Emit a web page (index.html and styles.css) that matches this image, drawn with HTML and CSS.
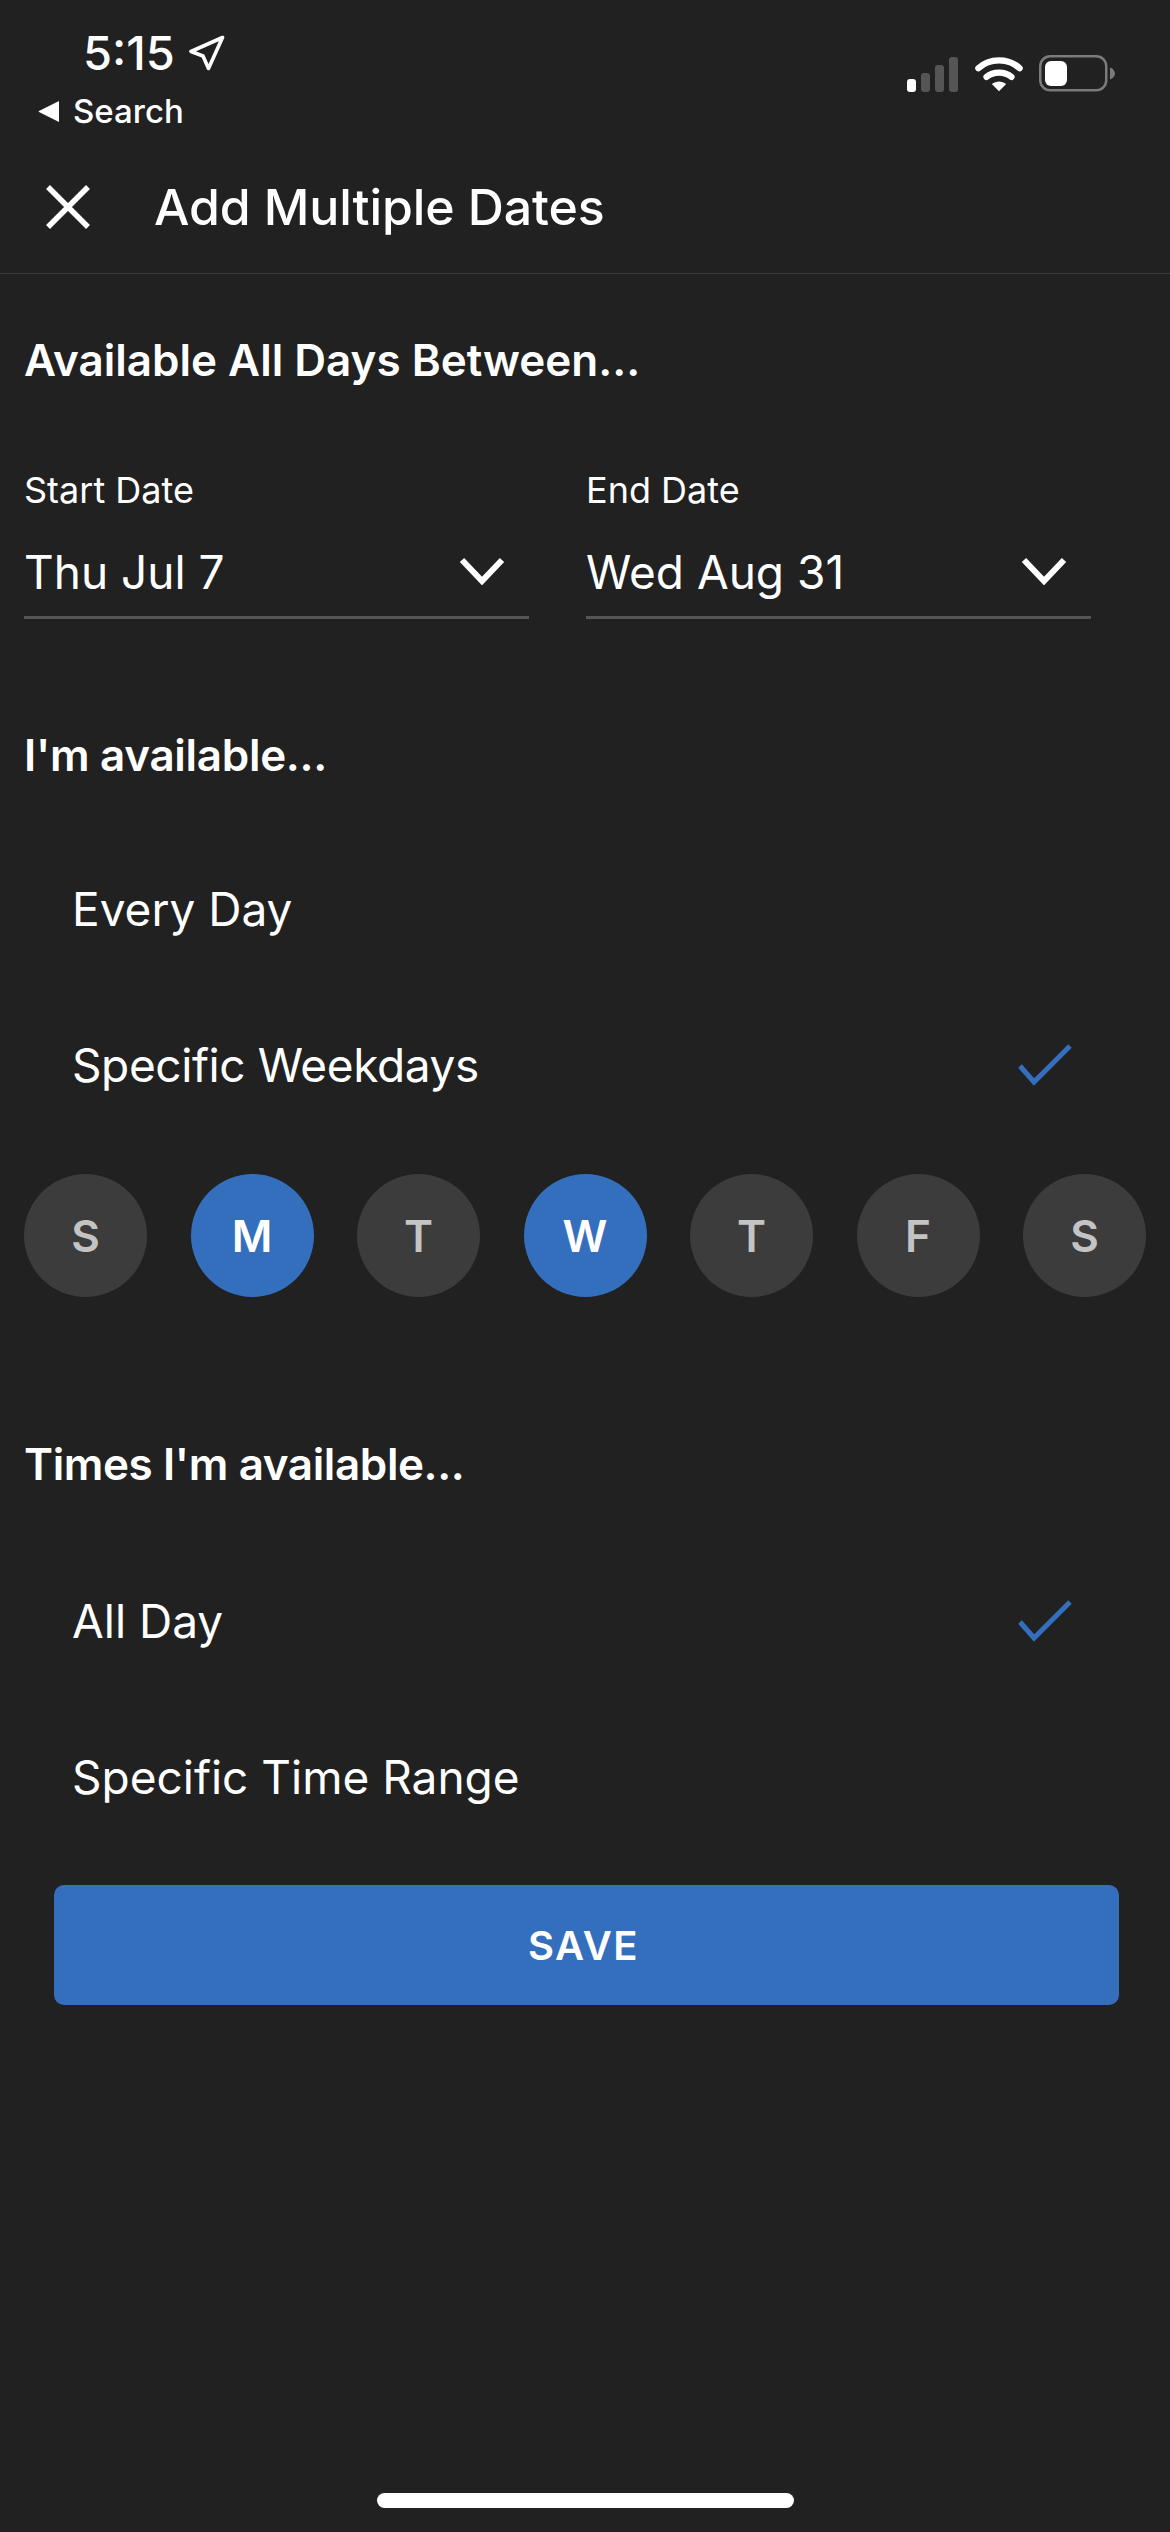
FILE: index.html
```html
<!DOCTYPE html>
<html lang="en">
<head>
<meta charset="utf-8">
<title>Add Multiple Dates</title>
<link rel="stylesheet" href="styles.css">
</head>
<body>
<div class="screen">
  <header class="top">
    <div class="status">
      <div class="status-left">
        <div class="time-row">
          <span class="time">5:15</span>
          <svg class="loc" width="36" height="36" viewBox="0 0 36 36"><path d="M33.500 2.500 L2 16.500 L14 21 L19.500 33.500 Z" fill="none" stroke="#fff" stroke-width="3.600" stroke-linejoin="round"/></svg>
        </div>
        <div class="back-row">
          <svg class="back-tri" width="21" height="21" viewBox="0 0 21 21"><path d="M21 0 V21 L1 11 Q0 10.500 1 10 Z" fill="#fff"/></svg>
          <span class="back-text">Search</span>
        </div>
      </div>
      <div class="status-right">
        <svg class="signal" width="52" height="35" viewBox="0 0 52 35"><rect x="0" y="22" width="9" height="13" rx="3" fill="#fff"/><rect x="14" y="16" width="9" height="19" rx="3" fill="#555"/><rect x="28" y="8" width="9" height="27" rx="3" fill="#555"/><rect x="42" y="0" width="9" height="35" rx="3" fill="#555"/></svg>
        <svg class="wifi" width="48" height="37" viewBox="0 0 50 37"><path d="M3.500 13 C15 2 35 2 46.500 13" fill="none" stroke="#fff" stroke-width="6.500" stroke-linecap="round"/><path d="M12 22 C19 16 31 16 38 22" fill="none" stroke="#fff" stroke-width="6.500" stroke-linecap="round"/><path d="M17.500 29.500 C22 26 28 26 32.500 29.500 L25 37 Z" fill="#fff"/></svg>
        <svg class="batt" width="76" height="37" viewBox="0 0 76 37"><rect x="1.250" y="1.250" width="66" height="34" rx="10" fill="none" stroke="#7b7b7b" stroke-width="2.500"/><rect x="6" y="6" width="22" height="25" rx="6" fill="#fff"/><path d="M71 12.500 C74 13.500 76 16 76 18.500 C76 21 74 23.500 71 24.500 Z" fill="#7b7b7b"/></svg>
      </div>
    </div>
    <div class="appbar">
      <svg class="close" width="44" height="44" viewBox="0 0 44 44"><path d="M2 2 L42 42 M42 2 L2 42" stroke="#fff" stroke-width="5.500" fill="none"/></svg>
      <h1 class="title">Add Multiple Dates</h1>
    </div>
  </header>

  <main class="content">
    <h2 class="heading h-first">Available All Days Between...</h2>
    <div class="dates">
      <div class="date-field">
        <div class="date-label">Start Date</div>
        <div class="date-value"><span>Thu Jul 7</span>
          <svg class="chev" width="46" height="28" viewBox="0 0 46 28"><path d="M3 3 L23 24 L43 3" fill="none" stroke="#fff" stroke-width="6"/></svg>
        </div>
      </div>
      <div class="date-field">
        <div class="date-label">End Date</div>
        <div class="date-value"><span>Wed Aug 31</span>
          <svg class="chev" width="46" height="28" viewBox="0 0 46 28"><path d="M3 3 L23 24 L43 3" fill="none" stroke="#fff" stroke-width="6"/></svg>
        </div>
      </div>
    </div>

    <h2 class="heading h-avail">I'm available...</h2>
    <div class="option opt-first"><span>Every Day</span></div>
    <div class="option"><span class="tight">Specific Weekdays</span>
      <svg class="check" width="54" height="42" viewBox="0 0 54 42"><path d="M2 22 L16 38 L52 2" fill="none" stroke="#346fbe" stroke-width="5"/></svg>
    </div>
    <div class="days">
      <div class="day">S</div>
      <div class="day on">M</div>
      <div class="day">T</div>
      <div class="day on">W</div>
      <div class="day">T</div>
      <div class="day">F</div>
      <div class="day">S</div>
    </div>

    <h2 class="heading h-times">Times I'm available...</h2>
    <div class="option opt-first opt-times"><span>All Day</span>
      <svg class="check" width="54" height="42" viewBox="0 0 54 42"><path d="M2 22 L16 38 L52 2" fill="none" stroke="#346fbe" stroke-width="5"/></svg>
    </div>
    <div class="option"><span>Specific Time Range</span></div>
    <button class="save">SAVE</button>
  </main>
  <div class="home"></div>
</div>
</body>
</html>
```
FILE: styles.css
```css
* { box-sizing: border-box; }
html, body { margin: 0; padding: 0; }
body { background: #212121; color: #fff; font-family: Inter, "Liberation Sans", sans-serif; }
.screen { width: 1170px; height: 2532px; display: flex; flex-direction: column; overflow: hidden; background: #212121; }

.top { height: 274px; border-bottom: 1px solid #3c3c3c; flex: none; }
.status { height: 136px; display: flex; justify-content: space-between; }
.status-left { padding-left: 38px; }
.time-row { height: 92px; padding: 26px 0 0 45px; display: flex; align-items: flex-start; gap: 14px; }
.time { font-size: 47px; line-height: 54px; font-weight: 500; }
.loc { margin-top: 9px; }
.back-row { display: flex; align-items: center; gap: 14px; height: 30px; margin-top: 4px; }
.back-text { font-size: 33px; line-height: 30px; font-weight: 500; }
.status-right { display: flex; align-items: flex-start; gap: 16px; padding: 55px 55px 0 0; }
.signal { margin-top: 2px; }

.appbar { height: 133px; padding: 0 0 0 46px; display: flex; align-items: center; gap: 64px; margin-top: 4px; }
.close { flex: none; }
.title { margin: 0; font-size: 50px; font-weight: 500; line-height: 60px; letter-spacing: -0.1px; }

.content { flex: 1; padding: 0 24px; }
.heading { margin: 0; font-size: 44px; line-height: 52px; font-weight: 600; }
.h-first { margin-top: 60px; }
.h-avail { margin-top: 110px; letter-spacing: -0.3px; }
.h-times { margin-top: 141px; letter-spacing: -0.4px; }

.dates { display: flex; gap: 56px; margin-top: 82px; }
.date-field { width: 505px; height: 151px; border-bottom: 3px solid #555; }
.date-field:last-child { margin-left: 1px; }
.date-label { font-size: 36px; line-height: 44px; }
.date-value { display: flex; align-items: center; justify-content: space-between; font-size: 46px; height: 60px; margin-top: 30px; padding-right: 24px; }
.chev { margin-top: -2px; }

.option { height: 156px; display: flex; align-items: center; justify-content: space-between; padding: 0 74px 0 48px; font-size: 46px; }
.tight { letter-spacing: -0.4px; }
.opt-first { margin-top: 50px; }
.opt-times { margin-top: 53px; }

.days { display: flex; justify-content: space-between; margin-top: 31px; width: 1122px; }
.day { width: 123px; height: 123px; border-radius: 50%; background: #3c3c3c; color: #c4c4c4; display: flex; align-items: center; justify-content: center; font-size: 44px; font-weight: 600; }
.day.on { background: #346fbe; color: #fff; }

.save { display: block; width: 1065px; height: 120px; margin: 30px 0 0 30px; padding: 0 6px 0 0; border: 0; border-radius: 10px; background: #346fbe; color: #fff; font-family: inherit; font-size: 40px; font-weight: 600; letter-spacing: 1.5px; }

.home { flex: none; width: 417px; height: 15px; border-radius: 8px; background: #fff; margin: 0 auto 24px; }
```
